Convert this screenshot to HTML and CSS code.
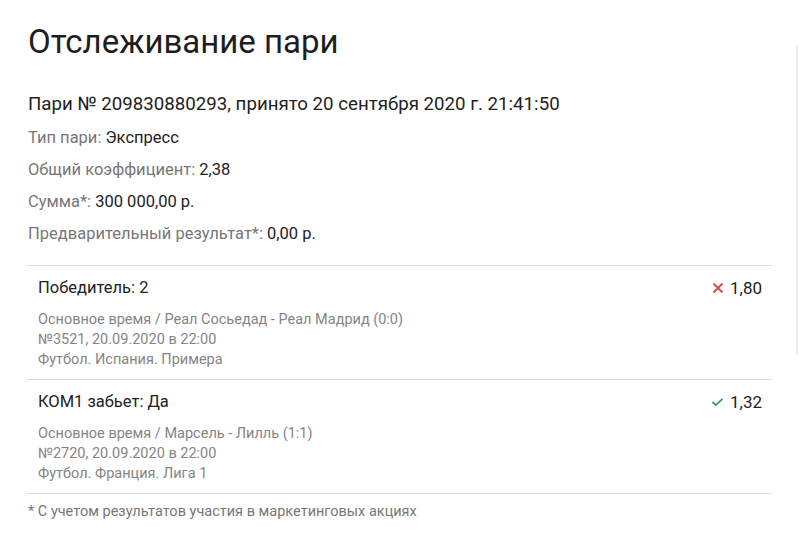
FILE: index.html
```html
<!DOCTYPE html>
<html lang="ru">
<head>
<meta charset="utf-8">
<title>Отслеживание пари</title>
<link rel="stylesheet" href="styles.css">
</head>
<body>
<div class="edge-shade"></div>
<main class="page">
  <h1 class="title">Отслеживание пари</h1>
  <h2 class="bet-head">Пари № 209830880293, принято 20 сентября 2020 г. 21:41:50</h2>
  <ul class="info">
    <li><span class="label">Тип пари:</span> <span class="value">Экспресс</span></li>
    <li><span class="label">Общий коэффициент:</span> <span class="value">2,38</span></li>
    <li><span class="label">Сумма*:</span> <span class="value">300 000,00 р.</span></li>
    <li><span class="label">Предварительный результат*:</span> <span class="value">0,00 р.</span></li>
  </ul>
  <div class="events">
    <div class="event">
      <div class="event-top">
        <div class="event-name">Победитель: 2</div>
        <div class="odds">
          <svg class="mark lose" width="12" height="12" viewBox="0 0 12 12"><path d="M1.5 1.5 L10.5 10.5 M10.5 1.5 L1.5 10.5" stroke="#d9464e" stroke-width="1.8" fill="none"/></svg>
          <span>1,80</span>
        </div>
      </div>
      <div class="event-meta">
        <div>Основное время / Реал Сосьедад - Реал Мадрид (0:0)</div>
        <div>№3521, 20.09.2020 в 22:00</div>
        <div>Футбол. Испания. Примера</div>
      </div>
    </div>
    <div class="event">
      <div class="event-top">
        <div class="event-name">КОМ1 забьет: Да</div>
        <div class="odds">
          <svg class="mark win" width="13" height="10" viewBox="0 0 13 10"><path d="M1.5 5 L4.8 8 L11.5 1.8" stroke="#2e9a6a" stroke-width="1.7" fill="none"/></svg>
          <span>1,32</span>
        </div>
      </div>
      <div class="event-meta">
        <div>Основное время / Марсель - Лилль (1:1)</div>
        <div>№2720, 20.09.2020 в 22:00</div>
        <div>Футбол. Франция. Лига 1</div>
      </div>
    </div>
  </div>
  <p class="note">* С учетом результатов участия в маркетинговых акциях</p>
</main>
</body>
</html>
```

FILE: styles.css
```css
html, body {
  margin: 0;
  padding: 0;
  background: #ffffff;
}

body {
  font-family: Roboto, "Noto Sans", sans-serif;
  color: #222222;
}

/* faint shadow of the neighbouring panel at the right edge */
.edge-shade {
  position: absolute;
  top: 45px;
  left: 796px;
  width: 2px;
  height: 310px;
  background: #ececec;
}

.page {
  width: 745px;
  padding: 20px 0 0 27px;
}

.title {
  margin: 0;
  font-size: 33px;
  font-weight: 400;
  line-height: 44px;
  color: #1e1e1e;
  padding-left: 1px;
}

.bet-head {
  margin: 28px 0 0 0;
  font-size: 18.7px;
  font-weight: 400;
  line-height: 24px;
  padding-left: 1px;
}

.info {
  list-style: none;
  margin: 6px 0 0 0;
  padding: 0 0 0 1px;
  font-size: 16.5px;
  line-height: 32px;
}

.info .label {
  color: #777777;
}

.info .value {
  color: #222222;
}

.events {
  margin-top: 15px;
  border-top: 1px solid #dcdcdc;
}

.event {
  border-bottom: 1px solid #dcdcdc;
  padding: 10px 10px 9px 11px;
}

.event-top {
  display: flex;
  justify-content: space-between;
  align-items: center;
}

.event-name {
  font-size: 16.5px;
  line-height: 24px;
}

.odds {
  display: flex;
  align-items: center;
  gap: 6px;
  font-size: 17px;
  line-height: 24px;
}

.mark {
  display: block;
}

.event-meta {
  margin-top: 10px;
  font-size: 14.5px;
  line-height: 20px;
  color: #858585;
}

.note {
  margin: 8px 0 0 1px;
  font-size: 14.5px;
  line-height: 20px;
  color: #777777;
}
```
